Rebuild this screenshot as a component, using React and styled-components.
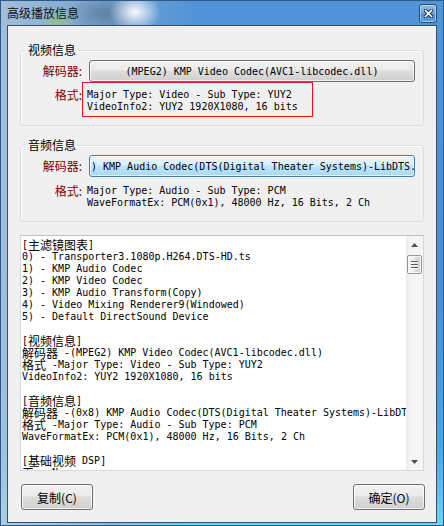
import React from "react";
import styled, { createGlobalStyle } from "styled-components";

const GlobalStyle = createGlobalStyle`
  html, body {
    margin: 0;
    padding: 0;
    background: #ffffff;
  }
  body {
    width: 444px;
    height: 526px;
    overflow: hidden;
  }
`;

const Window = styled.div`
  width: 444px;
  height: 526px;
  box-sizing: border-box;
  display: flex;
  flex-direction: column;
  padding: 0 7px 3px 7px;
  font-family: "Noto Sans CJK SC", "Liberation Sans", sans-serif;
  background:
    radial-gradient(ellipse 26px 20px at 135px 12px, rgba(255, 255, 255, 0.95), rgba(255, 255, 255, 0) 100%),
    radial-gradient(ellipse 18px 14px at 58px 22px, rgba(150, 200, 110, 0.7), rgba(150, 200, 110, 0) 100%),
    radial-gradient(ellipse 40px 20px at 105px 14px, rgba(70, 90, 110, 0.45), rgba(70, 90, 110, 0) 100%),
    linear-gradient(90deg, rgba(190, 205, 220, 0.75) 0%, rgba(150, 175, 200, 0.5) 25%, rgba(80, 150, 225, 0) 45%),
    linear-gradient(180deg, #4f93d8 0%, #4a8fd6 55%, #4aa6e2 85%, #6fd3f5 100%);
  box-shadow: inset 0 0 0 1px #2d5a86;
`;

const TitleBar = styled.div`
  height: 25px;
  flex: none;
  display: flex;
  align-items: flex-start;
  justify-content: space-between;
`;

const Title = styled.span`
  margin-top: 5px;
  font-size: 12px;
  line-height: 16px;
  color: #111;
`;

const CloseButton = styled.div`
  width: 18px;
  height: 19px;
  margin-top: 4px;
  box-sizing: border-box;
  border: 1px solid #2a4a70;
  border-radius: 3px;
  display: flex;
  align-items: center;
  justify-content: center;
  background: linear-gradient(180deg, #8dbbe9 0%, #6aa2dc 50%, #4e8bd0 51%, #5d9fe0 100%);
  box-shadow: inset 0 0 0 1px rgba(255, 255, 255, 0.45);
`;

const Client = styled.div`
  flex: 1;
  display: flex;
  flex-direction: column;
  background: #f0f0f0;
  border: 1px solid #34506e;
  padding: 16px 12px 12px 12px;
  min-height: 0;
`;

const Group = styled.fieldset`
  margin: ${p => p.$top}px 0 0 0;
  padding: 2px 8px 8px 0;
  border: 1px solid #d5dfe5;
  border-radius: 3px;
  min-width: 0;
  box-shadow: inset 1px 1px 0 #ffffff;
`;

const Legend = styled.legend`
  margin-left: 5px;
  padding: 0 2px;
  font-size: 12px;
  line-height: 16px;
  color: #000;
`;

const FieldGrid = styled.div`
  display: grid;
  grid-template-columns: 61px 1fr;
  align-items: start;
`;

const FieldLabel = styled.div`
  text-align: right;
  font-size: 12px;
  line-height: ${p => p.$lh}px;
  padding-top: ${p => p.$pt || 0}px;
  color: #800000;
  white-space: nowrap;
`;

const CodecButton = styled.div`
  margin-left: 7px;
  height: 22px;
  box-sizing: border-box;
  border: 1px solid ${p => (p.$focused ? "#3c7fb1" : "#707070")};
  border-radius: 3px;
  background: ${p =>
    p.$focused
      ? "linear-gradient(180deg, #eaf6fd 0%, #d9f0fc 45%, #bee6fd 50%, #a7d9f5 100%)"
      : "linear-gradient(180deg, #f2f2f2 0%, #ebebeb 45%, #dddddd 50%, #cfcfcf 100%)"};
  box-shadow: inset 0 0 0 1px rgba(255, 255, 255, 0.7);
  display: flex;
  align-items: center;
  justify-content: ${p => (p.$left ? "flex-start" : "center")};
  padding-left: ${p => (p.$left ? 1 : 0)}px;
  overflow: hidden;
  white-space: nowrap;
  font-family: "DejaVu Sans Mono", "Noto Sans CJK SC", monospace;
  font-size: 10px;
  color: #000;
`;

const InfoBlock = styled.div`
  width: ${p => (p.$marked ? "231px" : "auto")};
  box-sizing: border-box;
  border: 1px solid ${p => (p.$marked ? "#e8161b" : "transparent")};
  padding: 6px 0 3px 4px;
  margin-top: ${p => p.$mt || 0}px;
`;

const MonoLine = styled.div`
  height: 12px;
  line-height: 12px;
  white-space: pre;
  font-family: "DejaVu Sans Mono", "Noto Sans CJK SC", monospace;
  font-size: 10px;
  color: #000;
`;

const Han = styled.span`
  font-family: "Noto Sans CJK SC", sans-serif;
  font-size: 12px;
  line-height: 12px;
  vertical-align: top;
`;

const ListBox = styled.div`
  margin-top: 13px;
  height: 236px;
  box-sizing: border-box;
  display: flex;
  background: #ffffff;
  border: 1px solid #d2d9e1;
  border-top-color: #b9c0c8;
`;

const ListText = styled.div`
  flex: 1;
  min-width: 0;
  overflow: hidden;
  padding: 3px 0 0 1px;
`;

const ScrollBar = styled.div`
  width: 17px;
  flex: none;
  display: flex;
  flex-direction: column;
  align-items: center;
  background: linear-gradient(90deg, #ebebeb 0%, #f5f5f5 30%, #f5f5f5 100%);
`;

const ArrowBox = styled.div`
  width: 17px;
  height: 17px;
  flex: none;
  display: flex;
  align-items: center;
  justify-content: center;
  margin-top: ${p => (p.$bottom ? "auto" : "0")};
`;

const Thumb = styled.div`
  width: 15px;
  height: 19px;
  margin-top: 2px;
  box-sizing: border-box;
  border: 1px solid #979797;
  border-radius: 2px;
  background: linear-gradient(90deg, #f4f4f4 0%, #ececec 50%, #dcdcdc 51%, #d4d4d4 100%);
  box-shadow: inset 0 0 0 1px rgba(255, 255, 255, 0.8);
  display: flex;
  flex-direction: column;
  align-items: center;
  justify-content: center;
  gap: 1px;
`;

const Grip = styled.div`
  width: 7px;
  height: 1px;
  background: #5a5a5a;
  box-shadow: 0 1px 0 #ffffff;
  margin-bottom: 1px;
`;

const ButtonRow = styled.div`
  margin: 13px -1px 0 1px;
  display: flex;
  justify-content: space-between;
`;

const PushButton = styled.div`
  width: 72px;
  height: 26px;
  box-sizing: border-box;
  border: 1px solid #707070;
  border-radius: 3px;
  background: linear-gradient(180deg, #f2f2f2 0%, #ebebeb 45%, #dddddd 50%, #cfcfcf 100%);
  box-shadow: inset 0 0 0 1px rgba(255, 255, 255, 0.7);
  display: flex;
  align-items: center;
  justify-content: center;
  font-size: 12px;
  color: #000;
`;

const CJK = /([\u2e80-\u9fff\uff00-\uffef]+)/;

function Mixed({ text }) {
  return text
    .split(CJK)
    .map((part, i) => (CJK.test(part) ? <Han key={i}>{part}</Han> : part));
}

const listLines = [
  "[主滤镜图表]",
  "0) - Transporter3.1080p.H264.DTS-HD.ts",
  "1) - KMP Audio Codec",
  "2) - KMP Video Codec",
  "3) - KMP Audio Transform(Copy)",
  "4) - Video Mixing Renderer9(Windowed)",
  "5) - Default DirectSound Device",
  "",
  "[视频信息]",
  "解码器 -(MPEG2) KMP Video Codec(AVC1-libcodec.dll)",
  "格式 -Major Type: Video - Sub Type: YUY2",
  "VideoInfo2: YUY2 1920X1080, 16 bits",
  "",
  "[音频信息]",
  "解码器 -(0x8) KMP Audio Codec(DTS(Digital Theater Systems)-LibDTS.dll)",
  "格式 -Major Type: Audio - Sub Type: PCM",
  "WaveFormatEx: PCM(0x1), 48000 Hz, 16 Bits, 2 Ch",
  "",
  "[基础视频 DSP]",
  "无 - None",
  "",
];

const CloseIcon = () => (
  <svg width="9" height="9" viewBox="0 0 9 9">
    <path d="M1.5 1.5 L7.5 7.5 M7.5 1.5 L1.5 7.5" stroke="#1d2f48" strokeWidth="3.4" strokeLinecap="square" />
    <path d="M1.5 1.5 L7.5 7.5 M7.5 1.5 L1.5 7.5" stroke="#ffffff" strokeWidth="1.6" strokeLinecap="square" />
  </svg>
);

const Arrow = ({ down }) => (
  <svg width="7" height="4" viewBox="0 0 7 4">
    <path d={down ? "M0 0 H7 L3.5 4 Z" : "M0 4 H7 L3.5 0 Z"} fill="#4d4d4d" />
  </svg>
);

const InfoLines = ({ lines }) =>
  lines.map((l, i) => (
    <MonoLine key={i}>
      <Mixed text={l} />
    </MonoLine>
  ));

export default function App() {
  return (
    <>
      <GlobalStyle />
      <Window>
        <TitleBar>
          <Title>高级播放信息</Title>
          <CloseButton>
            <CloseIcon />
          </CloseButton>
        </TitleBar>
        <Client>
          <Group $top={0}>
            <Legend>视频信息</Legend>
            <FieldGrid>
              <FieldLabel $lh={22}>解码器:</FieldLabel>
              <CodecButton>(MPEG2) KMP Video Codec(AVC1-libcodec.dll)</CodecButton>
              <FieldLabel $lh={12} $pt={7}>格式:</FieldLabel>
              <InfoBlock $marked>
                <InfoLines
                  lines={["Major Type: Video - Sub Type: YUY2", "VideoInfo2: YUY2 1920X1080, 16 bits"]}
                />
              </InfoBlock>
            </FieldGrid>
          </Group>
          <Group $top={11}>
            <Legend>音频信息</Legend>
            <FieldGrid>
              <FieldLabel $lh={22}>解码器:</FieldLabel>
              <CodecButton $focused $left>
                ) KMP Audio Codec(DTS(Digital Theater Systems)-LibDTS.
              </CodecButton>
              <FieldLabel $lh={12} $pt={8}>格式:</FieldLabel>
              <InfoBlock $mt={1}>
                <InfoLines
                  lines={["Major Type: Audio - Sub Type: PCM", "WaveFormatEx: PCM(0x1), 48000 Hz, 16 Bits, 2 Ch"]}
                />
              </InfoBlock>
            </FieldGrid>
          </Group>
          <ListBox>
            <ListText>
              <InfoLines lines={listLines} />
            </ListText>
            <ScrollBar>
              <ArrowBox>
                <Arrow />
              </ArrowBox>
              <Thumb>
                <Grip />
                <Grip />
                <Grip />
              </Thumb>
              <ArrowBox $bottom>
                <Arrow down />
              </ArrowBox>
            </ScrollBar>
          </ListBox>
          <ButtonRow>
            <PushButton>复制(C)</PushButton>
            <PushButton>确定(O)</PushButton>
          </ButtonRow>
        </Client>
      </Window>
    </>
  );
}
